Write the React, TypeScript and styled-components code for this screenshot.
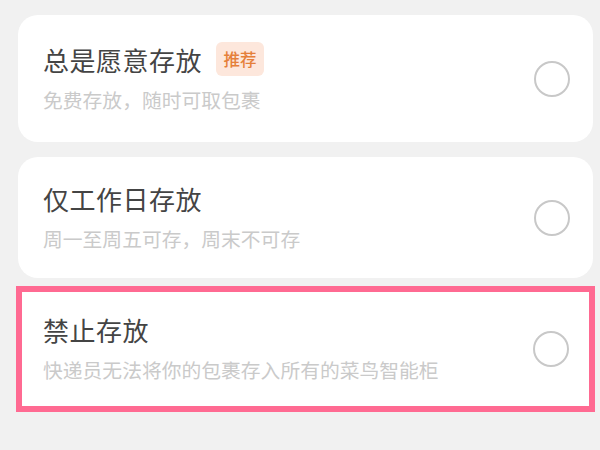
import React from 'react';
import styled, { createGlobalStyle } from 'styled-components';

const GlobalStyle = createGlobalStyle`
    html, body {
        margin: 0;
        padding: 0;
        background: #f1f1f1;
    }
    body {
        font-family: "Noto Sans CJK SC", "Noto Sans", sans-serif;
    }
`;

const Page = styled.div`
    width: 600px;
    height: 450px;
    box-sizing: border-box;
    padding: 15px 7px 0 18px;
    display: flex;
    flex-direction: column;
    gap: 15px;
    overflow: hidden;
`;

const Card = styled.div<{ $height: number; $inset: number; $flat?: boolean }>`
    height: ${p => p.$height}px;
    box-sizing: border-box;
    padding: 0 ${p => (p.$flat ? 20 : 23)}px 0 ${p => p.$inset}px;
    background: #fff;
    border-radius: ${p => (p.$flat ? 0 : 20)}px;
    display: flex;
    align-items: center;
    justify-content: space-between;
`;

// pink annotation frame drawn round the last option
const Highlight = styled.div`
    margin: -7px -2px 0 -2px;
    border: 6px solid #ff6a92;
    background: #fff;
`;

const TextBlock = styled.div`
    display: flex;
    flex-direction: column;
    gap: 12px;
`;

const TitleRow = styled.div`
    display: flex;
    align-items: center;
    height: 30px;
    gap: 14px;
`;

const Title = styled.span`
    font-size: 26px;
    line-height: 30px;
    letter-spacing: 0.5px;
    color: #444;
`;

const Badge = styled.span`
    display: inline-flex;
    align-items: center;
    justify-content: center;
    width: 48px;
    height: 34px;
    border-radius: 6px;
    background: #fde7dc;
    color: #e57f3a;
    font-size: 16.5px;
    font-weight: 500;
    margin-top: -2px;
`;

const Subtitle = styled.span`
    font-size: 19.8px;
    line-height: 26px;
    color: #cacaca;
`;

const Radio = styled.span`
    flex: none;
    width: 36px;
    height: 36px;
    box-sizing: border-box;
    border: 2px solid #c8c8c8;
    border-radius: 50%;
`;

type Option = {
    title: string;
    desc: string;
    tag?: string;
};

const options: Option[] = [
    { title: '总是愿意存放', desc: '免费存放，随时可取包裹', tag: '推荐' },
    { title: '仅工作日存放', desc: '周一至周五可存，周末不可存' },
];

const OptionBody = ({ title, desc, tag }: Option) => (
    <>
        <TextBlock>
            <TitleRow>
                <Title>{title}</Title>
                {tag && <Badge>{tag}</Badge>}
            </TitleRow>
            <Subtitle>{desc}</Subtitle>
        </TextBlock>
        <Radio />
    </>
);

const App = () => (
    <>
        <GlobalStyle />
        <Page>
            <Card $height={127} $inset={25}>
                <OptionBody {...options[0]} />
            </Card>
            <Card $height={121} $inset={25}>
                <OptionBody {...options[1]} />
            </Card>
            <Highlight>
                <Card $height={114} $inset={21} $flat>
                    <OptionBody title="禁止存放" desc="快递员无法将你的包裹存入所有的菜鸟智能柜" />
                </Card>
            </Highlight>
        </Page>
    </>
);

export default App;
